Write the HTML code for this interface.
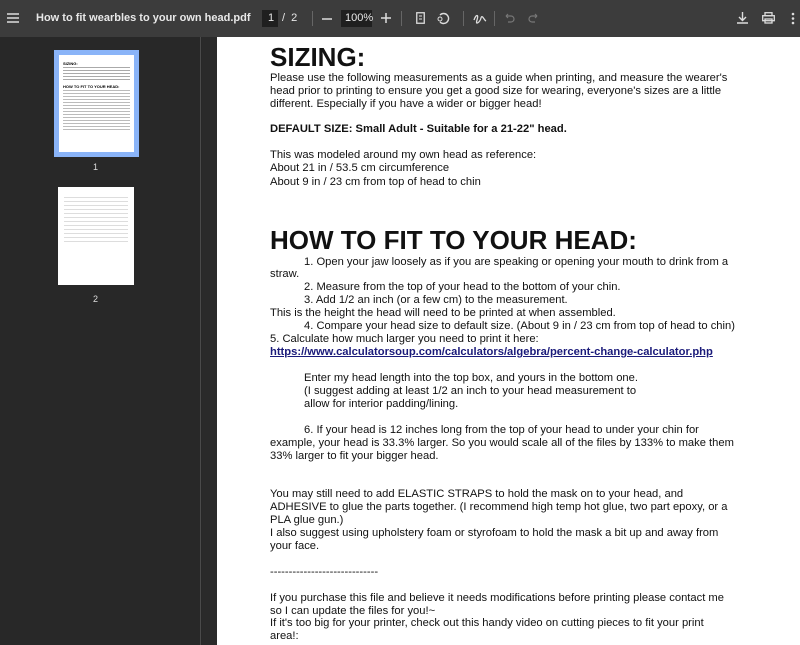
<!DOCTYPE html>
<html><head><meta charset="utf-8"><style>
*{margin:0;padding:0;box-sizing:border-box}
body{width:800px;height:645px;overflow:hidden;background:#282828;font-family:"Liberation Sans",Arial,sans-serif;position:relative}
#tb{position:absolute;left:0;top:0;width:800px;height:37px;background:#3c3c3c;color:#e8e8e8}
#tb .t{position:absolute;font-size:11px;font-weight:bold;top:12px}
#side{position:absolute;left:0;top:37px;width:201px;height:608px;background:#282828;border-right:1px solid #4a4a4a}
#main{position:absolute;left:202px;top:37px;width:598px;height:608px;background:#2a2a2a}
#page{position:absolute;left:217px;top:37px;width:583px;height:608px;background:#fff}
.l{position:absolute;left:270px;font-size:11.2px;color:#111;white-space:nowrap;line-height:14px}
.i{left:304px}
.h{position:absolute;left:270px;font-weight:bold;color:#111;white-space:nowrap}
svg{position:absolute}
</style></head><body>
<div id="tb">
<svg style="left:7px;top:13px" width="12" height="10"><path d="M0 1h12M0 5h12M0 9h12" stroke="#ddd" stroke-width="1.5"/></svg>
<div class="t" style="left:36px">How to fit wearbles to your own head.pdf</div>
<div style="position:absolute;left:262px;top:10px;width:16px;height:17px;background:#1f1f1f"></div>
<div class="t" style="left:268px;font-weight:normal">1</div>
<div class="t" style="left:282px;font-weight:normal">/&nbsp; 2</div>
<div style="position:absolute;left:312px;top:11px;width:1px;height:15px;background:#666"></div>
<svg style="left:322px;top:18px" width="10" height="2"><path d="M0 1h10" stroke="#ddd" stroke-width="1.5"/></svg>
<div style="position:absolute;left:341px;top:10px;width:31px;height:17px;background:#1f1f1f"></div>
<div class="t" style="left:345px;font-weight:normal">100%</div>
<svg style="left:381px;top:13px" width="10" height="10"><path d="M0 5h10M5 0v10" stroke="#ddd" stroke-width="1.5"/></svg>
<div style="position:absolute;left:401px;top:11px;width:1px;height:15px;background:#666"></div>
<svg style="left:416px;top:12px" width="9" height="12"><rect x=".75" y=".75" width="7.5" height="10.5" fill="none" stroke="#ddd" stroke-width="1.3"/><path d="M3 4h3M3 7h3" stroke="#ddd"/></svg>
<svg style="left:436px;top:11px" width="14" height="14"><path d="M4 4a5 5 0 1 1 0 7" fill="none" stroke="#ddd" stroke-width="1.4"/><circle cx="4" cy="8" r="2" fill="none" stroke="#ddd"/></svg>
<div style="position:absolute;left:463px;top:11px;width:1px;height:15px;background:#666"></div>
<svg style="left:473px;top:12px" width="14" height="12"><path d="M1 8c2-6 5-6 3 0s3 2 4-2 3 2 5 3" fill="none" stroke="#ddd" stroke-width="1.3"/></svg>
<div style="position:absolute;left:494px;top:11px;width:1px;height:15px;background:#666"></div>
<svg style="left:505px;top:13px" width="10" height="10"><path d="M1 3h5a3 3 0 0 1 0 6H3M1 3l2-2M1 3l2 2" fill="none" stroke="#777" stroke-width="1.2"/></svg>
<svg style="left:528px;top:13px" width="10" height="10"><path d="M9 3H4a3 3 0 0 0 0 6h3M9 3L7 1M9 3L7 5" fill="none" stroke="#777" stroke-width="1.2"/></svg>
<svg style="left:737px;top:12px" width="11" height="12"><path d="M5.5 0v8M2 5l3.5 3.5L9 5M0 11h11" fill="none" stroke="#ddd" stroke-width="1.4"/></svg>
<svg style="left:762px;top:12px" width="13" height="12"><rect x="3" y="0.7" width="7" height="3" fill="none" stroke="#ddd" stroke-width="1.3"/><rect x="0.7" y="3.7" width="11.6" height="5" fill="none" stroke="#ddd" stroke-width="1.3"/><rect x="3" y="7" width="7" height="4" fill="none" stroke="#ddd" stroke-width="1.3"/></svg>
<svg style="left:791px;top:12px" width="4" height="13"><circle cx="2" cy="2" r="1.3" fill="#ddd"/><circle cx="2" cy="6.5" r="1.3" fill="#ddd"/><circle cx="2" cy="11" r="1.3" fill="#ddd"/></svg>
</div>
<div id="side">
<div style="position:absolute;left:54px;top:13px;width:85px;height:107px;background:#8ab4f8"></div>
<div style="position:absolute;left:59px;top:18px;width:75px;height:97px;background:#fff;padding:6px 4px;overflow:hidden">
<div style="font:bold 4px 'Liberation Sans';color:#000">SIZING:</div>
<div style="height:14px;background:repeating-linear-gradient(#aaa 0 1px,#fff 1px 3px);margin-top:1px"></div>
<div style="font:bold 4px 'Liberation Sans';color:#000;margin-top:3px">HOW TO FIT TO YOUR HEAD:</div>
<div style="height:40px;background:repeating-linear-gradient(#bbb 0 1px,#fff 1px 3px);margin-top:1px"></div>
</div>
<div style="position:absolute;left:93px;top:125px;color:#ddd;font-size:9px">1</div>
<div style="position:absolute;left:58px;top:150px;width:76px;height:98px;background:#fff;padding:10px 6px"><div style="height:45px;background:repeating-linear-gradient(#ddd 0 1px,#fff 1px 4px)"></div></div>
<div style="position:absolute;left:93px;top:257px;color:#ddd;font-size:9px">2</div>
</div>
<div id="main"></div>
<div id="page"></div>
<div class="h" style="top:42px;font-size:26px">SIZING:</div>
<div class="l" style="top:71px">Please use the following measurements as a guide when printing, and measure the wearer's</div>
<div class="l" style="top:84px">head prior to printing to ensure you get a good size for wearing, everyone's sizes are a little</div>
<div class="l" style="top:97px">different. Especially if you have a wider or bigger head!</div>
<div class="l" style="top:122px;font-weight:bold">DEFAULT SIZE: Small Adult - Suitable for a 21-22" head.</div>
<div class="l" style="top:148px">This was modeled around my own head as reference:</div>
<div class="l" style="top:161px">About 21 in / 53.5 cm circumference</div>
<div class="l" style="top:175px">About 9 in / 23 cm from top of head to chin</div>
<div class="h" style="top:225px;font-size:26px">HOW TO FIT TO YOUR HEAD:</div>
<div class="l i" style="top:255px">1. Open your jaw loosely as if you are speaking or opening your mouth to drink from a</div>
<div class="l" style="top:267px">straw.</div>
<div class="l i" style="top:280px">2. Measure from the top of your head to the bottom of your chin.</div>
<div class="l i" style="top:293px">3. Add 1/2 an inch (or a few cm) to the measurement.</div>
<div class="l" style="top:306px">This is the height the head will need to be printed at when assembled.</div>
<div class="l i" style="top:319px">4. Compare your head size to default size. (About 9 in / 23 cm from top of head to chin)</div>
<div class="l" style="top:332px">5. Calculate how much larger you need to print it here:</div>
<div class="l" style="top:345px;font-weight:bold;color:#1a1a7a;text-decoration:underline">https://www.calculatorsoup.com/calculators/algebra/percent-change-calculator.php</div>
<div class="l i" style="top:371px">Enter my head length into the top box, and yours in the bottom one.</div>
<div class="l i" style="top:384px">(I suggest adding at least 1/2 an inch to your head measurement to</div>
<div class="l i" style="top:397px">allow for interior padding/lining.</div>
<div class="l i" style="top:423px">6. If your head is 12 inches long from the top of your head to under your chin for</div>
<div class="l" style="top:436px">example, your head is 33.3% larger. So you would scale all of the files by 133% to make them</div>
<div class="l" style="top:449px">33% larger to fit your bigger head.</div>
<div class="l" style="top:487px">You may still need to add ELASTIC STRAPS to hold the mask on to your head, and</div>
<div class="l" style="top:500px">ADHESIVE to glue the parts together. (I recommend high temp hot glue, two part epoxy, or a</div>
<div class="l" style="top:513px">PLA glue gun.)</div>
<div class="l" style="top:526px">I also suggest using upholstery foam or styrofoam to hold the mask a bit up and away from</div>
<div class="l" style="top:539px">your face.</div>
<div class="l" style="top:565px">-----------------------------</div>
<div class="l" style="top:591px">If you purchase this file and believe it needs modifications before printing please contact me</div>
<div class="l" style="top:604px">so I can update the files for you!~</div>
<div class="l" style="top:616px">If it's too big for your printer, check out this handy video on cutting pieces to fit your print</div>
<div class="l" style="top:629px">area!:</div>
</body></html>
